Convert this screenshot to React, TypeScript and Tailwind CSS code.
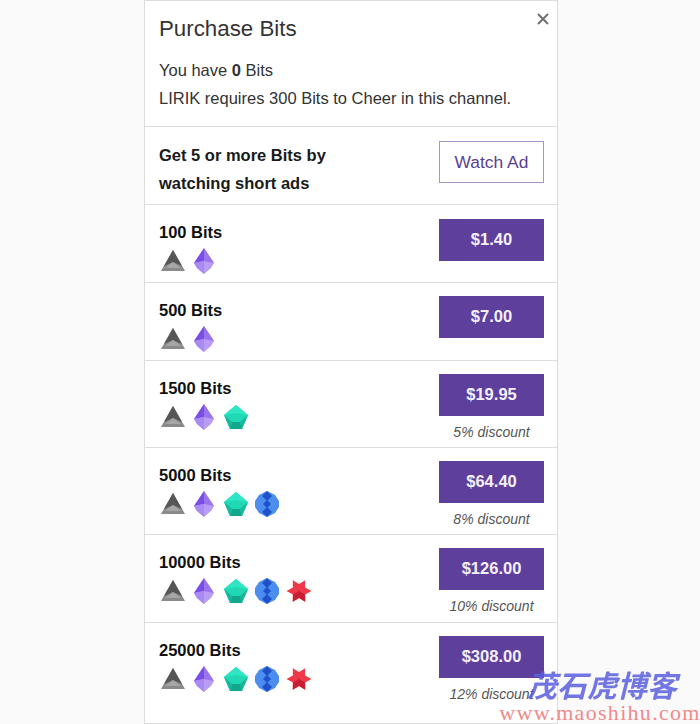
import React from "react";

function Gray() {
  return (
    <svg width="26" height="26" viewBox="0 0 26 26">
      <polygon points="13,2 25,23 1,23" fill="#8a8a8a" />
      <polygon points="13,2 22,18 13,14 4,18" fill="#565656" />
      <polygon points="13,14 21,20 5,20" fill="#a6a6a6" />
    </svg>
  );
}

function Purple() {
  return (
    <svg width="26" height="26" viewBox="0 0 26 26">
      <polygon points="13,0 23,15 20,20 13,26 6,20 3,15" fill="#b89cf5" />
      <polygon points="13,0 3,15 13,13" fill="#7a4ee6" />
      <polygon points="13,0 23,15 13,13" fill="#9a74ef" />
      <polygon points="3,15 6,20 13,26 13,13" fill="#a98af2" />
    </svg>
  );
}

function Teal() {
  return (
    <svg width="26" height="26" viewBox="0 0 26 26">
      <polygon points="13,1 25,11 19,25 7,25 1,11" fill="#20d8b4" />
      <polygon points="13,1 25,11 13,9 1,11" fill="#2ee6c4" />
      <polygon points="7,25 19,25 17,18 9,18" fill="#12a68c" />
      <polygon points="1,11 9,18 7,25" fill="#17b89c" />
      <polygon points="25,11 17,18 19,25" fill="#17b89c" />
    </svg>
  );
}

function Blue() {
  return (
    <svg width="26" height="26" viewBox="0 0 26 26">
      <polygon points="13,0 21,4 25,10 25,16 21,22 13,26 5,22 1,16 1,10 5,4" fill="#4c8df0" />
      <polygon points="13,0 18,5 13,10 8,5" fill="#1f52c8" />
      <polygon points="13,9 17,13 13,17 9,13" fill="#1f52c8" />
      <polygon points="13,16 18,21 13,26 8,21" fill="#1f52c8" />
    </svg>
  );
}

function Red() {
  return (
    <svg width="26" height="26" viewBox="0 0 26 26">
      <polygon
        points="25.5,13 19.1,9.5 19.2,2.2 13,6 6.8,2.2 6.9,9.5 0.5,13 6.9,16.5 6.8,23.8 13,20 19.2,23.8 19.1,16.5"
        fill="#ee3a48"
      />
      <polygon points="13,13 19.1,16.5 19.2,23.8 13,20 6.8,23.8 6.9,16.5" fill="#c91f30" />
    </svg>
  );
}

const gems = [Gray, Purple, Teal, Blue, Red];

const rows = [
  { bits: "100 Bits", count: 2, price: "$1.40", discount: "", height: "h-[78px]", top: "pt-[14px]" },
  { bits: "500 Bits", count: 2, price: "$7.00", discount: "", height: "h-[78px]", top: "pt-[13px]" },
  { bits: "1500 Bits", count: 3, price: "$19.95", discount: "5% discount", height: "h-[87px]", top: "pt-[13px]" },
  { bits: "5000 Bits", count: 4, price: "$64.40", discount: "8% discount", height: "h-[87px]", top: "pt-[13px]" },
  { bits: "10000 Bits", count: 5, price: "$126.00", discount: "10% discount", height: "h-[88px]", top: "pt-[13px]" },
  { bits: "25000 Bits", count: 5, price: "$308.00", discount: "12% discount", height: "h-[101px]", top: "pt-[13px]" },
];

export default function App() {
  return (
    <div className="relative h-[724px] w-[700px] overflow-hidden bg-[#fafafa] font-['Liberation_Sans',sans-serif]">
      <div className="relative ml-[144px] h-[724px] w-[414px] border border-[#dcdcdc] bg-white text-[#222]">
        <div className="h-[125px] px-[14px] pt-[14px]">
          <p className="text-[22.3px] leading-[28px] text-[#333]">Purchase Bits</p>
          <p className="mt-[13px] text-[16.5px] leading-[28px] text-[#333]">
            You have <b>0</b> Bits
          </p>
          <p className="text-[16.5px] leading-[28px] text-[#333]">
            LIRIK requires 300 Bits to Cheer in this channel.
          </p>
        </div>
        <button className="absolute right-[6px] top-[10px]">
          <svg width="16" height="16" viewBox="0 0 16 16">
            <path d="M3 3 L13 13 M13 3 L3 13" stroke="#707070" strokeWidth="2" />
          </svg>
        </button>

        <div className="flex h-[78px] justify-between border-t border-[#dcdcdc] pl-[14px] pr-[13px] pt-[14px]">
          <p className="text-[16.5px] font-bold leading-[28px] text-[#1a1a1a]">
            Get 5 or more Bits by
            <br />
            watching short ads
          </p>
          <div className="flex h-[42px] w-[105px] items-center justify-center border border-[#a794c9] text-[17.4px] text-[#5a3f94]">
            Watch Ad
          </div>
        </div>

        {rows.map((row) => (
          <div
            key={row.bits}
            className={`flex justify-between border-t border-[#dcdcdc] pl-[14px] pr-[13px] ${row.height}`}
          >
            <div className="pt-[17px]">
              <p className="text-[16.5px] font-bold leading-[20px] text-[#111]">{row.bits}</p>
              <div className="mt-[4px] flex h-[30px] items-center gap-[5.5px] pl-[0.5px] blur-[0.4px]">
                {gems.slice(0, row.count).map((Gem, i) => (
                  <Gem key={i} />
                ))}
              </div>
            </div>
            <div className={`flex w-[105px] flex-col items-center ${row.top}`}>
              <div className="flex h-[42px] w-full items-center justify-center bg-[#5f3f9c] pb-[1px] text-[16.5px] font-bold text-[#f4f0fa]">
                {row.price}
              </div>
              {row.discount && (
                <p className="mt-[7px] text-[14px] italic leading-[18px] text-[#555]">{row.discount}</p>
              )}
            </div>
          </div>
        ))}
      </div>

      <div className="absolute left-[500px] top-[666px] flex w-[200px] flex-col items-center">
        <p className="ml-[4px] font-['Noto_Sans_CJK_SC',sans-serif] text-[30px] font-bold italic leading-[36px] text-[#5a5fe0] opacity-85">
          茂石虎博客
        </p>
        <p className="font-['Liberation_Serif',serif] text-[22px] leading-[22px] tracking-[1.3px] text-[#f08a8a]">
          www.maoshihu.com
        </p>
      </div>
    </div>
  );
}
